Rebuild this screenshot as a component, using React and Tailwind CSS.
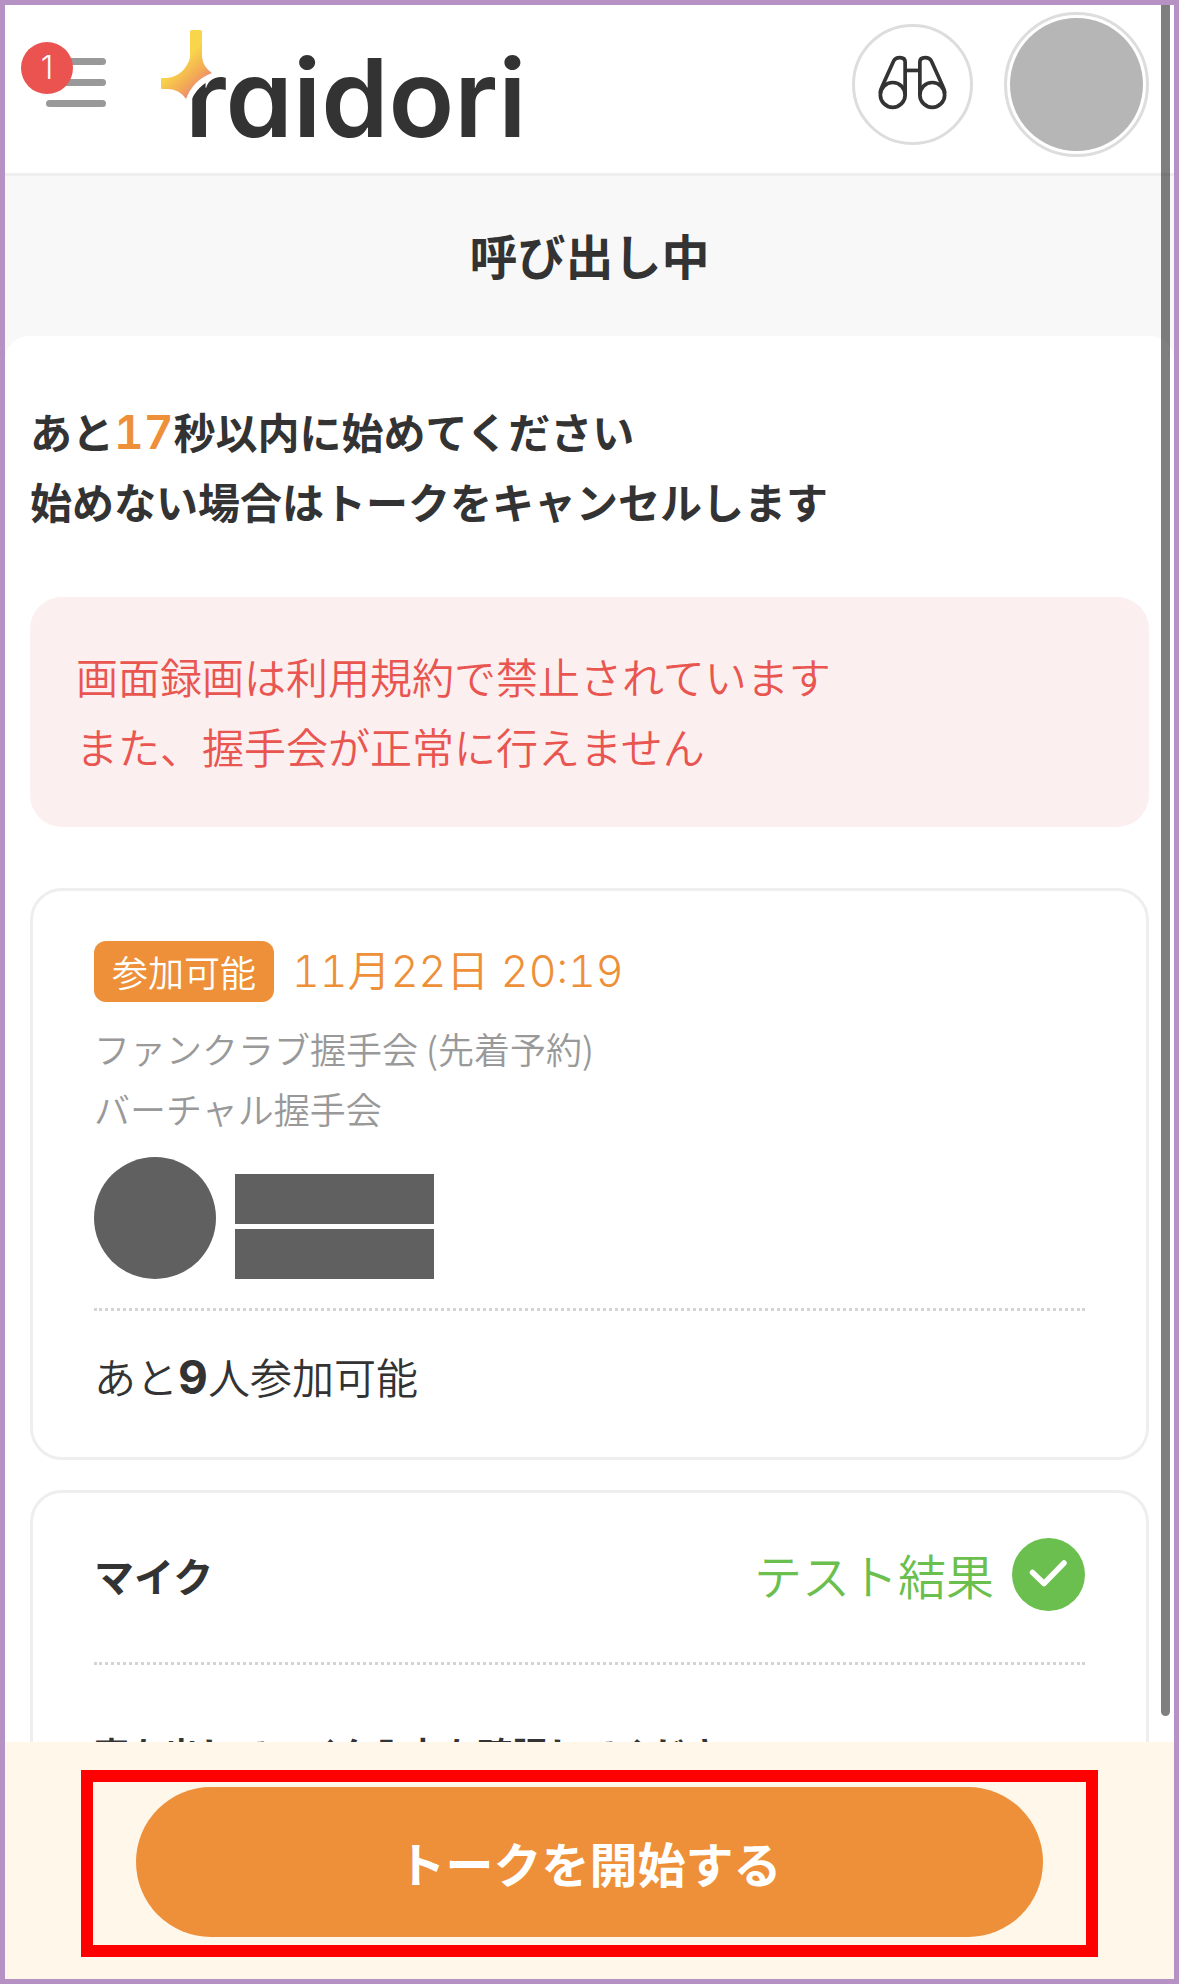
import React from 'react'

function MenuButton({ count }) {
    return (
        <button type="button" aria-label="メニュー" className="relative flex h-[97px] w-[85px] flex-col items-end justify-center gap-[14px]">
            <span className="h-[7px] w-[60px] rounded-full bg-[#999]"></span>
            <span className="h-[7px] w-[60px] rounded-full bg-[#999]"></span>
            <span className="h-[7px] w-[60px] rounded-full bg-[#999]"></span>
            <span className="absolute left-0 top-2 flex h-[52px] w-[52px] items-center justify-center rounded-full bg-[#eb5350] font-['Inter'] text-[32px] font-light leading-none text-white">{count}</span>
        </button>
    )
}

function Logo() {
    return (
        <a href="#" className="relative block h-[124px] pl-[24px]">
            <span className="block font-['Inter'] text-[108px] font-semibold leading-[156px] text-[#333] [font-feature-settings:'cv11']">raidori</span>
            <svg className="absolute left-0 top-[10px]" width="76" height="80" viewBox="161 30 76 80" fill="none" aria-hidden="true">
                <defs>
                    <linearGradient id="spark" x1="176" y1="62" x2="202" y2="90" gradientUnits="userSpaceOnUse">
                        <stop offset="0.1" stopColor="#f8d54a" />
                        <stop offset="0.6" stopColor="#f3aa55" />
                        <stop offset="1" stopColor="#e98080" />
                    </linearGradient>
                </defs>
                <path d="M187 102 Q193 83 215 74" stroke="#fff" strokeWidth="7" />
                <path d="M190 32 Q190 30 192 30 H200 Q202 30 202 32 V57 Q203 67 212 73 Q193 80 186 99 Q179 89 168 89 H162 Q161 89 161 88 V79 Q161 78 162 78 H167 Q184 76 190 58 Z" fill="url(#spark)" />
            </svg>
        </a>
    )
}

function Binoculars() {
    return (
        <svg className="mb-1" width="69" height="55" viewBox="176 163 206 164" fill="none" stroke="#333" strokeWidth="11" aria-hidden="true">
            <circle cx="220" cy="282" r="37" />
            <circle cx="338" cy="282" r="37" />
            <path d="M183 276 Q183 268 187 260 L222 182 Q227 171 241 171 Q257 171 257 184 V282" />
            <path d="M375 276 Q375 268 371 260 L336 182 Q331 171 317 171 Q301 171 301 184 V282" />
            <path d="M257 209 H301" />
        </svg>
    )
}

function Header() {
    return (
        <header className="flex h-[171px] shrink-0 items-center border-b-3 border-[#eee] bg-white px-[25px] pb-[10px]">
            <div className="-ml-[9px] flex flex-1 items-center gap-[55px] pb-1">
                <MenuButton count={1} />
                <Logo />
            </div>
            <div className="flex items-center gap-[31px]">
                <button type="button" aria-label="さがす" className="flex h-[121px] w-[121px] items-center justify-center rounded-full border-3 border-[#ddd]">
                    <Binoculars />
                </button>
                <button type="button" aria-label="マイページ" className="h-[145px] w-[145px] rounded-full border-3 border-[#ddd] p-[3px]">
                    <span className="block h-full w-full rounded-full bg-[#b6b6b6]"></span>
                </button>
            </div>
        </header>
    )
}

function EventCard() {
    return (
        <section className="mt-[61px] rounded-[32px] border-3 border-[#eee] px-[61px] pb-[46px] pt-[50px]">
            <div className="flex items-center gap-[18px]">
                <span className="rounded-xl bg-[#ee9039] px-[18px] text-[36px] font-[350] leading-[61px] text-white">参加可能</span>
                <time className="font-['Inter','Noto_Sans_CJK_JP',sans-serif] text-[43px] font-[350] leading-[61px] tabular-nums text-[#ee9039]">11月22日 20:19</time>
            </div>
            <p className="mt-[16px] text-[36px] font-[350] leading-[60px] text-[#999]">
                ファンクラブ握手会 (先着予約)<br />
                バーチャル握手会
            </p>
            <div className="mt-[19px] flex items-end gap-[19px]">
                <div className="h-[122px] w-[122px] rounded-full bg-[#606060]"></div>
                <div className="flex flex-col gap-[5px]">
                    <div className="h-[50px] w-[199px] bg-[#606060]"></div>
                    <div className="h-[50px] w-[199px] bg-[#606060]"></div>
                </div>
            </div>
            <p className="mt-[29px] border-t-3 border-dotted border-[#d4d4d4] pt-[30px] text-[42px] font-[350] leading-[70px]">
                あと<b className="font-['Inter'] text-[46px] font-bold leading-none">9</b>人参加可能
            </p>
        </section>
    )
}

function MicCard() {
    return (
        <section className="mt-[30px] rounded-[32px] border-3 border-[#eee] px-[61px] pb-[44px] pt-[45px]">
            <div className="flex items-center justify-between">
                <h2 className="text-[40px] font-bold">マイク</h2>
                <div className="flex items-center gap-[18px] text-[#6bbf4e]">
                    <span className="text-[48px] font-[350] leading-[73px]">テスト結果</span>
                    <svg width="73" height="73" viewBox="0 0 73 73" fill="none" aria-hidden="true">
                        <circle cx="36.5" cy="36.5" r="36.5" fill="#6bbf4e" />
                        <path d="M20.5 34.5 L32 45.5 L52 25" stroke="#fff" strokeWidth="5.5" strokeLinecap="round" strokeLinejoin="round" />
                    </svg>
                </div>
            </div>
            <p className="mt-[51px] border-t-3 border-dotted border-[#d4d4d4] pt-[58px] text-[35px] font-bold leading-[60px]">声を出してマイク入力を確認してください</p>
        </section>
    )
}

export default class App extends React.Component {
    constructor(props) {
        super(props)
        this.state = {
            secondsLeft: 17
        }
    }

    render() {
        const { secondsLeft } = this.state
        return (
            <div className="relative flex h-screen flex-col overflow-hidden border-5 border-[#b592c3] bg-[#f8f8f8] font-['Noto_Sans_CJK_JP',sans-serif] text-[#333]">
                <Header />
                <h1 className="shrink-0 pb-1 text-center text-[48px] font-bold leading-[156px]">呼び出し中</h1>
                <main className="min-h-0 flex-1 overflow-hidden rounded-t-3xl bg-white px-[25px] pt-[60px]">
                    <p className="text-[42px] font-bold leading-[70px]">
                        あと<span className="font-['Inter'] text-[46px] font-semibold leading-none tabular-nums text-[#ee9039]">{secondsLeft}</span>秒以内に始めてください<br />
                        始めない場合はトークをキャンセルします
                    </p>
                    <p className="mt-[61px] rounded-[32px] bg-[#fcefef] px-[46px] pb-[46px] pt-[44px] text-[42px] font-[350] leading-[70px] text-[#e95550]">
                        画面録画は利用規約で禁止されています<br />
                        また、握手会が正常に行えません
                    </p>
                    <EventCard />
                    <MicCard />
                </main>
                <footer className="shrink-0 bg-[#fff7ea] px-[76px] pb-[22px] pt-[28px]">
                    <div className="border-12 border-[#f00] px-[43px] pb-[8px] pt-[5px]">
                        <button type="button" className="block h-[150px] w-full rounded-full bg-[#ee9039] text-[48px] font-bold text-white">トークを開始する</button>
                    </div>
                </footer>
                {/* scroll thumb */}
                <div className="absolute bottom-[263px] right-1 top-0 w-[9px] rounded-b-full bg-black/50"></div>
            </div>
        )
    }
}
